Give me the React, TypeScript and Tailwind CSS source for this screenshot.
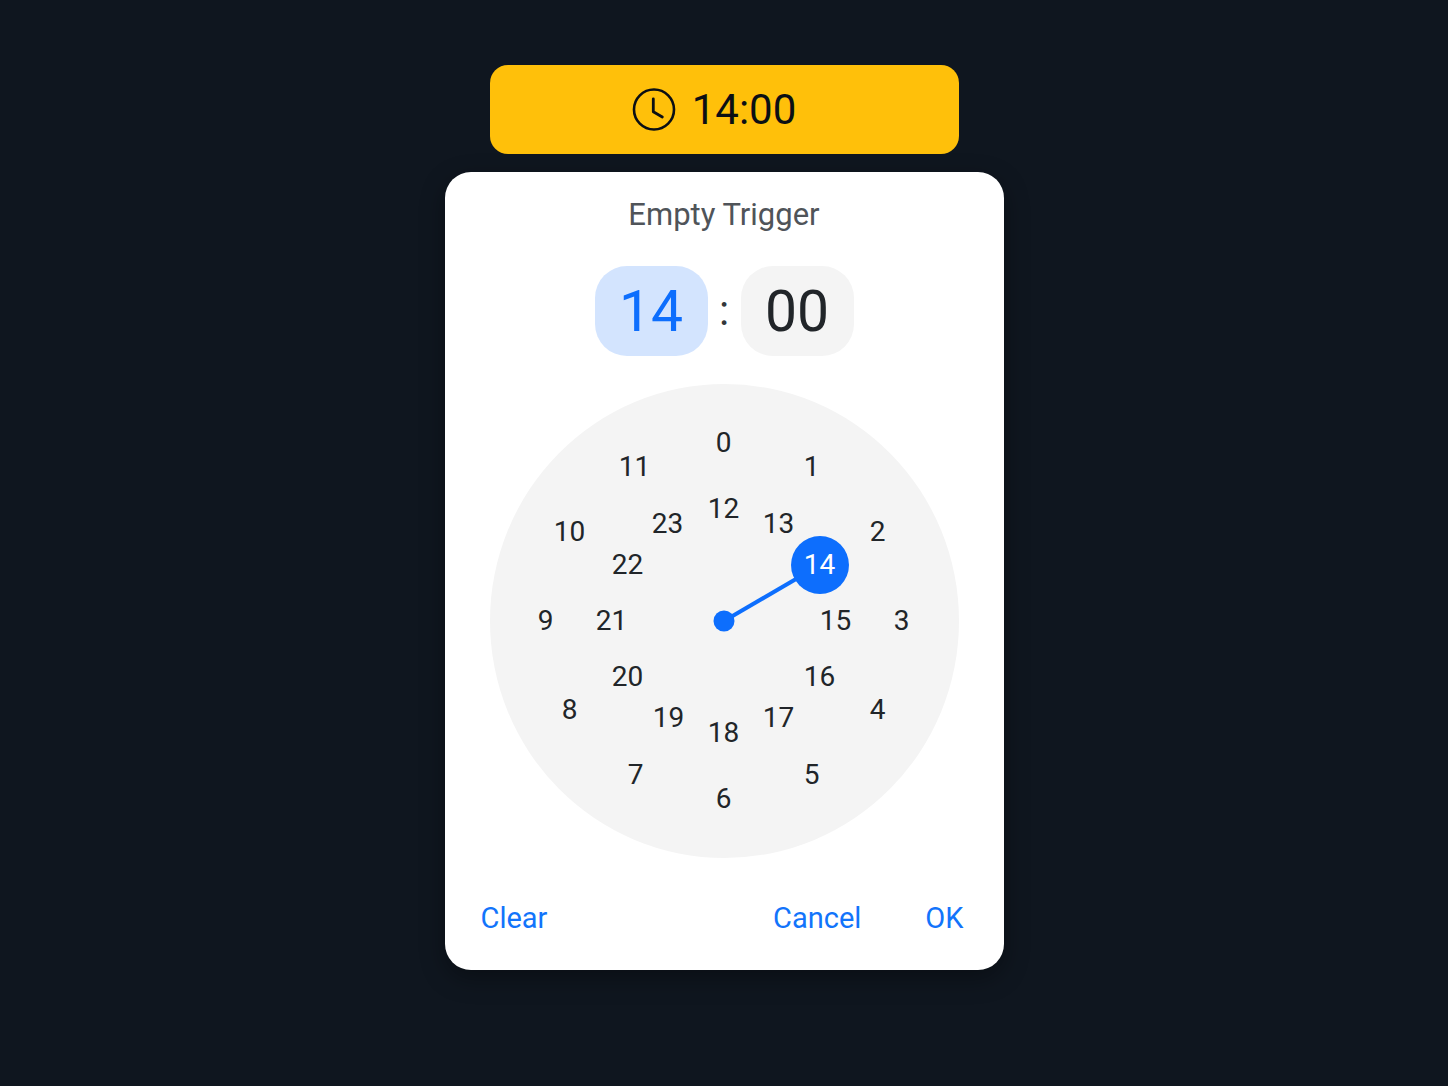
import React, { useState } from "react";

const CENTER_X = 234;
const CENTER_Y = 237;
const OUTER_RADIUS = 178;
const INNER_RADIUS = 112;

function position(hour: number) {
  const radius = hour < 12 ? OUTER_RADIUS : INNER_RADIUS;
  const angle = ((hour % 12) * Math.PI) / 6;
  return {
    x: CENTER_X + Math.trunc(Math.sin(angle) * radius),
    y: CENTER_Y - Math.round(Math.cos(angle) * radius),
  };
}

function ClockIcon() {
  return (
    <svg width="44" height="44" viewBox="0 0 44 44" fill="none" stroke="currentColor" aria-hidden="true">
      <circle cx="22" cy="21.5" r="20" strokeWidth="2.6" />
      <path d="M21.3 10.8v13l9 5.2" strokeWidth="2.8" strokeLinecap="round" strokeLinejoin="round" />
    </svg>
  );
}

function Dial({ hour, onSelect }: { hour: number; onSelect: (hour: number) => void }) {
  const hand = position(hour);
  return (
    <div className="relative mx-auto mt-7 h-[474px] w-[469px] rounded-[50%] bg-[#f4f4f4]">
      <svg className="absolute inset-0 h-full w-full text-[#0d6efd]" viewBox="0 0 469 474" aria-hidden="true">
        <line x1={CENTER_X} y1={CENTER_Y} x2={hand.x} y2={hand.y} stroke="currentColor" strokeWidth="4" />
        <circle cx={CENTER_X} cy={CENTER_Y} r="10.5" fill="currentColor" />
      </svg>
      {Array.from({ length: 24 }, (_, value) => {
        const { x, y } = position(value);
        const selected = value === hour;
        return (
          <button
            key={value}
            type="button"
            aria-pressed={selected}
            onClick={() => onSelect(value)}
            style={{ left: x, top: y }}
            className={`absolute flex size-[58px] -translate-x-1/2 -translate-y-1/2 items-center justify-center rounded-full text-[28px] leading-8 ${
              selected ? "z-10 bg-[#0d6efd] text-white" : "text-[#212529]"
            }`}
          >
            {value}
          </button>
        );
      })}
    </div>
  );
}

export default function App() {
  const [hour, setHour] = useState(14);
  return (
    <main className="flex min-h-screen flex-col items-center bg-[#0f161f] px-4 pt-[65px] pb-16 font-['Roboto',sans-serif]">
      <button
        type="button"
        className="flex h-[89px] w-full max-w-[469px] items-center justify-center gap-4 rounded-[18px] bg-[#ffc00a] pr-5 text-[42px] leading-none text-[#0b0f14]"
      >
        <ClockIcon />
        <span>{hour}:00</span>
      </button>
      <section
        role="dialog"
        aria-label="Empty Trigger"
        className="mt-[18px] w-full max-w-[559px] rounded-[26px] bg-white px-9 pt-[25px] pb-7 shadow-[0_8px_24px_rgba(0,0,0,0.35)]"
      >
        <h1 className="text-center text-[31px] leading-9 text-[#505459]">Empty Trigger</h1>
        <div className="mt-[33px] flex items-center justify-center text-[57px] leading-none">
          <button type="button" aria-label="Hour" className="flex h-[90px] w-[113px] items-center justify-center rounded-[32px] bg-[#d3e4fe] text-[#0d6efd]">
            {hour}
          </button>
          <span className="w-[33px] text-center text-[42px] text-[#33373b]">:</span>
          <button type="button" aria-label="Minute" className="flex h-[90px] w-[113px] items-center justify-center rounded-[32px] bg-[#f4f4f4] text-[#212529]">
            00
          </button>
        </div>
        <Dial hour={hour} onSelect={setHour} />
        <footer className="mt-9 flex items-center pr-1 text-[29px] leading-12 text-[#1274fb]">
          <button type="button">Clear</button>
          <button type="button" className="ml-auto">Cancel</button>
          <button type="button" className="ml-16">OK</button>
        </footer>
      </section>
    </main>
  );
}
